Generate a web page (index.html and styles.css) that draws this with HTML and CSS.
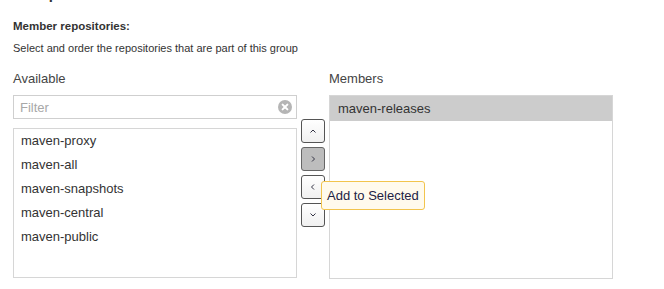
FILE: index.html
```html
<!DOCTYPE html>
<html lang="en">
<head>
  <meta charset="UTF-8" />
  <meta name="viewport" content="width=device-width, initial-scale=1.0" />
  <title>Member repositories</title>
  <link rel="stylesheet" href="styles.css">
</head>
<body>

  <h3 class="group-title">Group</h3>

  <div class="field-label">Member repositories:</div>
  <div class="field-help">Select and order the repositories that are part of this group</div>

  <div class="picker">
    <!-- available column -->
    <div class="column">
      <div class="column-title">Available</div>
      <div class="filter">
        <span class="filter-text">Filter</span>
        <span class="filter-clear">
          <svg width="14" height="14" viewBox="0 0 14 14">
            <circle cx="7" cy="7" r="7" fill="#b5b5b5" />
            <path d="M4.6 4.6 L9.4 9.4 M9.4 4.6 L4.6 9.4" stroke="#fff" stroke-width="2" stroke-linecap="round" />
          </svg>
        </span>
      </div>
      <ul class="list available">
        <li>maven-proxy</li>
        <li>maven-all</li>
        <li>maven-snapshots</li>
        <li>maven-central</li>
        <li>maven-public</li>
      </ul>
    </div>

    <!-- move buttons -->
    <div class="buttons">
      <button class="move">
        <svg width="8" height="6" viewBox="0 0 8 6"><path d="M1.5 4.5 L4 2 L6.5 4.5" fill="none" stroke="#334" stroke-width="1" /></svg>
      </button>
      <button class="move pressed">
        <svg width="6" height="8" viewBox="0 0 6 8"><path d="M2 1.5 L4.5 4 L2 6.5" fill="none" stroke="#334" stroke-width="1" /></svg>
      </button>
      <div class="move-wrap">
        <button class="move">
          <svg width="6" height="8" viewBox="0 0 6 8"><path d="M4 1.5 L1.5 4 L4 6.5" fill="none" stroke="#334" stroke-width="1" /></svg>
        </button>
        <div class="tooltip">Add to Selected</div>
      </div>
      <button class="move">
        <svg width="8" height="6" viewBox="0 0 8 6"><path d="M1.5 1.5 L4 4 L6.5 1.5" fill="none" stroke="#334" stroke-width="1" /></svg>
      </button>
    </div>

    <!-- members column -->
    <div class="column">
      <div class="column-title">Members</div>
      <ul class="list members">
        <li class="selected">maven-releases</li>
      </ul>
    </div>
  </div>

</body>
</html>
```

FILE: styles.css
```css
body {
  margin: 0;
  padding: 0 13px;
  background: #ffffff;
  color: #333333;
  font-family: 'Liberation Sans', Arial, sans-serif;
  font-size: 13px;
  overflow: hidden;
}

.group-title {
  margin: -15px 0 0 0;
  height: 17px;
  font-size: 15px;
  font-weight: bold;
  line-height: 17px;
  color: #333333;
}

.field-label {
  margin-top: 17px;
  font-size: 11.5px;
  font-weight: bold;
  line-height: 14px;
  color: #333333;
}

.field-help {
  margin-top: 9px;
  font-size: 11px;
  line-height: 13px;
  color: #333333;
}

.picker {
  display: flex;
  margin-top: 16px;
}

.column {
  display: flex;
  flex-direction: column;
  width: 284px;
}

.column-title {
  height: 16px;
  line-height: 16px;
  color: #444444;
  margin-bottom: 8px;
}

.filter {
  display: flex;
  align-items: center;
  justify-content: space-between;
  height: 22px;
  border: 1px solid #cfcfcf;
  padding: 0 4px 0 6px;
}

.filter-text {
  color: #a8a8a8;
}

.filter-clear {
  display: flex;
}

.list {
  list-style: none;
  margin: 0;
  padding: 0;
  border: 1px solid #d6d6d6;
}

.list li {
  height: 24px;
  line-height: 24px;
  padding-left: 7px;
}

.available {
  margin-top: 9px;
  height: 148px;
}

.members {
  height: 182px;
}

.members .selected {
  background: #cccccc;
  height: 25px;
  line-height: 25px;
  padding-left: 8px;
}

.buttons {
  display: flex;
  flex-direction: column;
  gap: 4px;
  padding: 48px 4px 0 4px;
}

.move-wrap {
  position: relative;
}

.move {
  display: flex;
  align-items: center;
  justify-content: center;
  width: 24px;
  height: 24px;
  padding: 0;
  border: 1px solid #555555;
  border-radius: 3px;
  background: linear-gradient(#ffffff, #f0f0f0);
  cursor: pointer;
}

.pressed {
  background: #bdbdbd;
  border-color: #666666;
}

.tooltip {
  position: absolute;
  top: 6px;
  left: 20px;
  white-space: nowrap;
  padding: 0 5px;
  height: 27px;
  line-height: 27px;
  font-size: 13px;
  color: #222244;
  background: #fffaed;
  border: 1px solid #f2c44d;
  border-radius: 3px;
}
```
